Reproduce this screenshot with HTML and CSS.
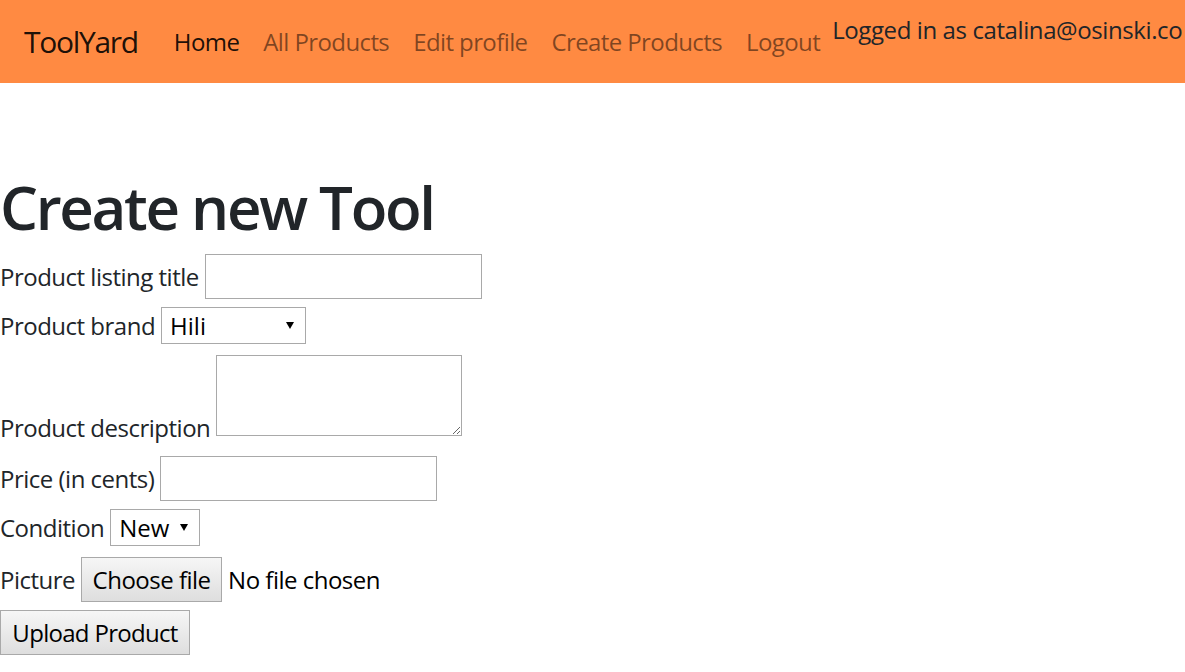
FILE: index.html
```html
<!DOCTYPE html>
<html lang="en">
<head>
<meta charset="utf-8">
<title>ToolYard</title>
<link rel="stylesheet" href="styles.css">
</head>
<body>
<nav class="navbar">
  <a class="brand" href="#">ToolYard</a>
  <ul class="nav">
    <li><a class="nav-link active" href="#">Home</a></li>
    <li><a class="nav-link" href="#">All Products</a></li>
    <li><a class="nav-link" href="#">Edit profile</a></li>
    <li><a class="nav-link" href="#">Create Products</a></li>
    <li><a class="nav-link" href="#">Logout</a></li>
  </ul>
  <span class="logged">Logged in as catalina@osinski.co</span>
</nav>
<main class="main">
  <h1 class="title">Create new Tool</h1>
  <form class="form">
    <div class="row row-tall"><label class="label" for="title">Product listing title</label><input class="text" id="title" type="text"></div>
    <div class="row row-short"><label class="label" for="brand">Product brand</label><span class="select-wrap brand-select"><select class="select" id="brand"><option>Hili</option></select></span></div>
    <div class="row row-area"><label class="label label-area" for="desc">Product description</label><textarea class="area" id="desc"></textarea></div>
    <div class="row row-tall"><label class="label" for="price">Price (in cents)</label><input class="text" id="price" type="text"></div>
    <div class="row row-short"><label class="label" for="cond">Condition</label><span class="select-wrap cond-select"><select class="select" id="cond"><option>New</option></select></span></div>
    <div class="row row-tall"><span class="label">Picture</span><span class="btn file-btn">Choose file</span><span class="file-name">No file chosen</span></div>
    <div class="row row-last"><button class="btn upload-btn" type="button">Upload Product</button></div>
  </form>
</main>
</body>
</html>
```

FILE: styles.css
```css
* { box-sizing: border-box; }
html, body { margin: 0; padding: 0; }
body {
  font-family: "Open Sans", "Noto Sans", sans-serif;
  font-size: 24px;
  line-height: 1.5;
  letter-spacing: -0.5px;
  color: #212529;
  background: #fff;
  overflow: hidden;
}
.navbar {
  display: flex;
  align-items: center;
  height: 83px;
  padding: 0 24px;
  background: #ff8a42;
  white-space: nowrap;
}
.brand {
  font-size: 30px;
  line-height: 45px;
  letter-spacing: -1.3px;
  color: rgba(0, 0, 0, .9);
  text-decoration: none;
  margin-right: 24px;
}
.nav { display: flex; list-style: none; margin: 0; padding: 0; }
.nav-link {
  display: block;
  padding: 0 12px;
  line-height: 36px;
  letter-spacing: -0.6px;
  color: rgba(0, 0, 0, .5);
  text-decoration: none;
}
.nav-link.active { color: rgba(0, 0, 0, .9); }
.logged {
  align-self: flex-start;
  margin-top: 12px;
  line-height: 36px;
  letter-spacing: -0.4px;
  color: #212529;
}
.main { padding-top: 88px; }
.title {
  margin: 0 0 11px;
  font-size: 60px;
  font-weight: 600;
  letter-spacing: -2.3px;
  line-height: 72px;
  color: #212529;
}
.form { display: flex; flex-direction: column; align-items: flex-start; }
.row { display: flex; align-items: center; gap: 6px; white-space: nowrap; }
.row-tall { height: 45px; margin-bottom: 8px; }
.row-short { height: 37px; margin-bottom: 11px; }
.row-area { height: 81px; align-items: flex-end; margin-bottom: 20px; }
.row-last { height: 45px; }
.label { line-height: 36px; }
.label-area { margin-bottom: -10px; }
.text {
  width: 277px;
  height: 45px;
  border: 1px solid #a9a9a9;
  background: #fff;
  font: inherit;
  padding: 1px 3px;
  margin: 0;
}
.area {
  width: 246px;
  height: 81px;
  border: 1px solid #a9a9a9;
  font: inherit;
  margin: 0;
  padding: 3px;
}
.select-wrap { position: relative; display: block; }
.select-wrap::after {
  content: "";
  position: absolute;
  right: 12px;
  top: 50%;
  margin-top: -4px;
  border-left: 4px solid transparent;
  border-right: 4px solid transparent;
  border-top: 7px solid #000;
  pointer-events: none;
}
.select {
  appearance: none;
  -webkit-appearance: none;
  height: 37px;
  border: 1px solid #a9a9a9;
  border-radius: 0;
  background: #fff;
  font: inherit;
  line-height: 35px;
  color: #000;
  padding: 0 0 0 8px;
  margin: 0;
  display: block;
}
.brand-select .select { width: 145px; }
.cond-select .select { width: 90px; }
.btn {
  display: flex;
  align-items: center;
  justify-content: center;
  height: 45px;
  border: 1px solid #a9a9a9;
  background: linear-gradient(#f6f6f6, #dedede);
  font: inherit;
  color: #000;
  margin: 0;
  padding: 0;
  border-radius: 0;
  white-space: nowrap;
}
.file-btn { width: 141px; }
.upload-btn { width: 190px; letter-spacing: -0.7px; }
.file-name { color: #000; }
```
